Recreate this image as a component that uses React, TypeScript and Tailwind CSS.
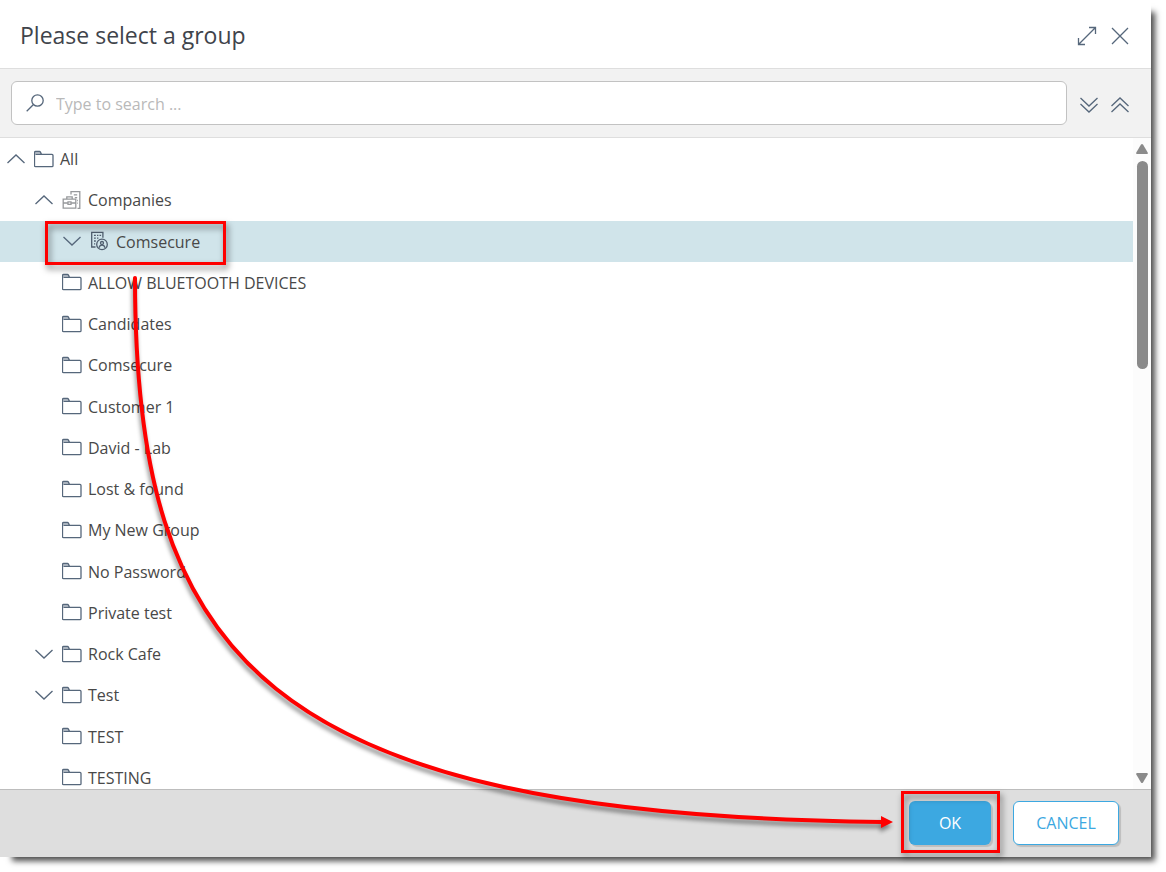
import type { ReactNode } from 'react'

type IconKind = 'folder' | 'companies' | 'company'

interface GroupRow {
  name: string
  level: 0 | 1 | 2
  icon: IconKind
  toggle?: 'open' | 'closed'
  selected?: boolean
}

const groups: GroupRow[] = [
  { name: 'All', level: 0, icon: 'folder', toggle: 'open' },
  { name: 'Companies', level: 1, icon: 'companies', toggle: 'open' },
  { name: 'Comsecure', level: 2, icon: 'company', toggle: 'closed', selected: true },
  { name: 'ALLOW BLUETOOTH DEVICES', level: 1, icon: 'folder' },
  { name: 'Candidates', level: 1, icon: 'folder' },
  { name: 'Comsecure', level: 1, icon: 'folder' },
  { name: 'Customer 1', level: 1, icon: 'folder' },
  { name: 'David - Lab', level: 1, icon: 'folder' },
  { name: 'Lost & found', level: 1, icon: 'folder' },
  { name: 'My New Group', level: 1, icon: 'folder' },
  { name: 'No Password', level: 1, icon: 'folder' },
  { name: 'Private test', level: 1, icon: 'folder' },
  { name: 'Rock Cafe', level: 1, icon: 'folder', toggle: 'closed' },
  { name: 'Test', level: 1, icon: 'folder', toggle: 'closed' },
  { name: 'TEST', level: 1, icon: 'folder' },
  { name: 'TESTING', level: 1, icon: 'folder' },
]

const indent = {
  0: 'pl-[7px]',
  1: 'pl-[35px]',
  2: 'pl-[63px]',
}

function Icon({ className, box, children }: { className: string; box: string; children: ReactNode }) {
  return (
    <svg
      aria-hidden="true"
      viewBox={box}
      fill="none"
      stroke="currentColor"
      strokeWidth={1.3}
      className={`shrink-0 ${className}`}
    >
      {children}
    </svg>
  )
}

function RowIcon({ kind }: { kind: IconKind }) {
  if (kind === 'companies') {
    return (
      <Icon box="0 0 20 20" className="size-5 text-[#97999c]">
        <path d="M9 4.500V1.600h8.800v16.800h-2.300M11.800 4.800h3.400M12.800 7.600h2.400M15 10.500h.8M15 13.200h.8" />
        <path d="M1.200 9.200h12.600v9H1.200zM1.200 13h4.800M9 13h4.800M6 11.800h3v2.600H6zM4.800 9V6.900h5.400V9" />
      </Icon>
    )
  }
  if (kind === 'company') {
    return (
      <Icon box="0 0 20 20" className="size-5 text-[#4f5d6e]">
        <path d="M5.500 16H1.700V1.300h11.200v5.500M4 4.400h1.800M7 4.400h1.400M9.500 4.400h1.600M4 7.200h1.800M7 7.200h1.400M4 10h1.800M4 12.800h1.200" />
        <circle cx="12" cy="13.400" r="5.300" />
        <circle cx="12" cy="12" r="1.500" />
        <path d="M9.200 16.800c.3-3.600 5.300-3.600 5.600 0" />
      </Icon>
    )
  }
  return (
    <Icon box="0 0 20 18" className="h-[18px] w-5 text-[#56677b]">
      <path d="M1.500 4.400h16.500q1 0 1 1v10.300q0 1-1 1h-16.500q-1 0-1-1V2.500q0-1 1-1h4q.6 0 .9.600l1.100 2.300" />
      <path d="M1 3h5.500" strokeOpacity=".5" />
    </Icon>
  )
}

function Toggle({ state, name }: { state?: 'open' | 'closed'; name: string }) {
  if (!state) return <span className="w-[18px] shrink-0" />
  return (
    <button type="button" aria-label={`Toggle ${name}`} aria-expanded={state === 'open'} className="text-[#56677b]">
      <Icon box="0 0 18 10" className="h-[10px] w-[18px]">
        <path d={state === 'open' ? 'M.5 9L9 1l8.500 8' : 'M.5 1L9 9l8.500-8'} />
      </Icon>
    </button>
  )
}

function Highlight({ className }: { className: string }) {
  return (
    <span
      className={`pointer-events-none absolute z-10 border-[3px] border-[#fe0000] drop-shadow-[2px_4px_3px_rgba(0,0,0,0.5)] ${className}`}
    />
  )
}

function Row({ row }: { row: GroupRow }) {
  return (
    <li
      role="treeitem"
      aria-level={row.level + 1}
      aria-selected={!!row.selected}
      className={`relative flex items-center ${indent[row.level]} ${row.selected ? 'bg-[#d0e4ea]' : ''}`}
    >
      <Toggle state={row.toggle} name={row.name} />
      <span className="ml-[9px] mr-[6px] flex">
        <RowIcon kind={row.icon} />
      </span>
      <span className="pt-px">{row.name}</span>
      {row.selected && <Highlight className="left-[45px] top-0 h-11 w-[181px]" />}
    </li>
  )
}

function ScrollBar() {
  return (
    <div className="flex w-[18px] shrink-0 flex-col items-center bg-[#fcfcfc] py-[5px] text-[#8a8a8a]">
      <svg aria-hidden="true" viewBox="0 0 12 12" className="size-3" fill="currentColor">
        <path d="M5 1.500q1-1 2 0l4.700 8q.5 1.500-1 1.500h-9.400q-1.500 0-1-1.500z" />
      </svg>
      <div className="mt-[6px] h-[208px] w-[11px] rounded-full bg-[#8a8a8a]" />
      <svg aria-hidden="true" viewBox="0 0 12 12" className="mt-auto size-3" fill="currentColor">
        <path d="M5 10.500q1 1 2 0l4.700-8q.5-1.500-1-1.500h-9.400q-1.500 0-1 1.500z" />
      </svg>
    </div>
  )
}

export default function App() {
  return (
    <div className="h-screen bg-white pb-[15px] pr-[15px] font-['Open_Sans','Noto_Sans',sans-serif] text-base text-[#484848]">
      <div
        role="dialog"
        aria-labelledby="dialog-title"
        className="relative flex h-full flex-col bg-white shadow-[8px_8px_6px_-4px_rgba(0,0,0,0.7)]"
      >
        <header className="flex h-[69px] shrink-0 items-center justify-between border-b border-[#dedede] pl-5 pr-[22px] pt-[3px]">
          <h1 id="dialog-title" className="text-[23px] text-[#3f444b]">Please select a group</h1>
          <div className="flex items-center gap-[14px] text-[#56677b]">
            <button type="button" aria-label="Maximize">
              <Icon box="0 0 20 20" className="size-5">
                <path d="M1.500 18.500l17-17M12 1.500h6.500V8M1.500 12v6.500H8" />
              </Icon>
            </button>
            <button type="button" aria-label="Close">
              <Icon box="0 0 18 18" className="size-[18px]">
                <path d="M1 1l16 16M17 1L1 17" />
              </Icon>
            </button>
          </div>
        </header>

        <div className="flex h-[69px] shrink-0 items-center border-b border-[#dedede] bg-[#f2f2f2] pl-[11px] pr-[22px]">
          <label className="flex h-11 flex-1 items-center gap-3 rounded-md border border-[#c2c2c2] bg-white px-[14px]">
            <Icon box="0 0 18 18" className="size-[18px] text-[#56677b]">
              <circle cx="11.500" cy="6.500" r="5.700" />
              <path d="M7.500 10.500L.7 17.300" />
            </Icon>
            <input
              type="text"
              aria-label="Search groups"
              placeholder="Type to search ..."
              className="min-w-0 flex-1 bg-transparent pt-[2px] outline-none placeholder:text-[#b9b9b9]"
            />
          </label>
          <div className="ml-[13px] flex items-center gap-[13px] pt-1 text-[#56677b]">
            <button type="button" aria-label="Expand all">
              <Icon box="0 0 18 16" className="h-4 w-[18px]">
                <path d="M.5 1L9 9l8.500-8M.5 7L9 15l8.500-8" />
              </Icon>
            </button>
            <button type="button" aria-label="Collapse all">
              <Icon box="0 0 18 16" className="h-4 w-[18px]">
                <path d="M.5 9L9 1l8.500 8M.5 15L9 7l8.500 8" />
              </Icon>
            </button>
          </div>
        </div>

        <div className="flex min-h-0 flex-1 overflow-hidden">
          <ul role="tree" className="grid h-[660px] flex-1 auto-rows-fr">
            {groups.map((row, i) => (
              <Row key={i} row={row} />
            ))}
          </ul>
          <ScrollBar />
        </div>

        <footer className="flex h-[68px] shrink-0 items-center justify-end gap-[22px] border-t border-[#bdbdbd] bg-[#dedede] pb-[2px] pr-8">
          <div className="relative">
            <button
              type="button"
              className="h-11 w-[82px] rounded-md bg-[#3ca8e1] text-white shadow-[2px_2px_1px_rgba(0,0,0,0.15)]"
            >
              OK
            </button>
            <Highlight className="-bottom-2 -left-2 -right-[9px] -top-[10px]" />
          </div>
          <button
            type="button"
            className="h-11 w-[106px] rounded-md border border-[#3ca8e1] bg-white text-[#3ca8e1] shadow-[2px_2px_1px_rgba(0,0,0,0.15)]"
          >
            CANCEL
          </button>
        </footer>

        {/* callout arrow from the selected group to the OK button */}
        <svg
          aria-hidden="true"
          viewBox="0 0 1151 857"
          className="pointer-events-none absolute inset-0 size-full drop-shadow-[-1px_4px_2px_rgba(0,0,0,0.45)]"
        >
          <path
            d="M135 278C135 655 262 815 882 822"
            fill="none"
            stroke="#fe0000"
            strokeWidth="4"
            strokeLinecap="round"
          />
          <path d="M881 816l12 6-12 6z" fill="#fe0000" />
        </svg>
      </div>
    </div>
  )
}
